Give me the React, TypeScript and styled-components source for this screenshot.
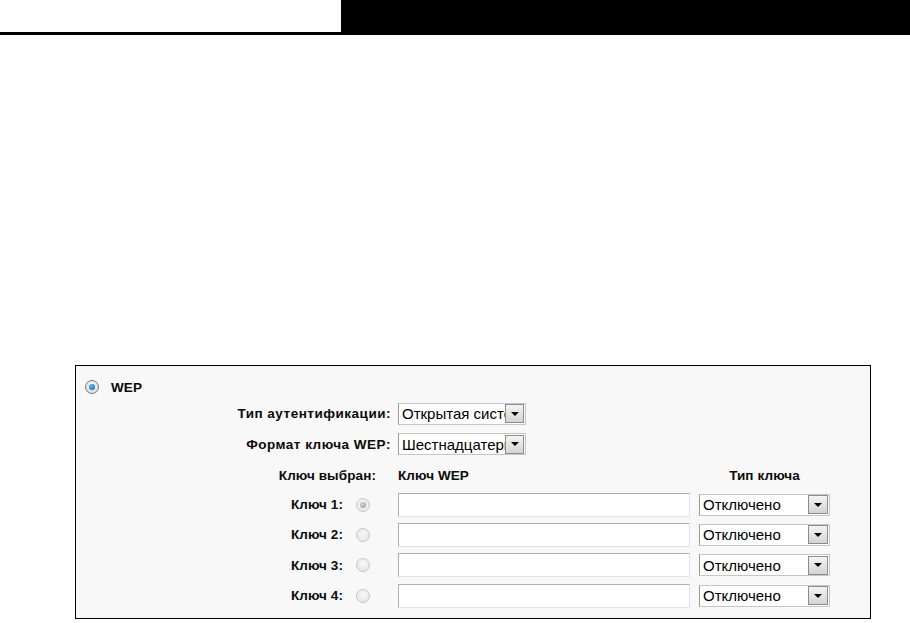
import React from "react";
import styled, { createGlobalStyle } from "styled-components";

const GlobalStyle = createGlobalStyle`
  html, body {
    margin: 0;
    padding: 0;
    background: #fff;
    font-family: "Liberation Sans", Arial, sans-serif;
  }
`;

const keys = [
  { label: "Ключ 1:", checked: true },
  { label: "Ключ 2:", checked: false },
  { label: "Ключ 3:", checked: false },
  { label: "Ключ 4:", checked: false },
];

const Page = () => {
  return (
    <Wrapper>
      <GlobalStyle />
      <Header>
        <HeaderLeft />
        <HeaderRight />
      </Header>
      <Panel>
        <Form>
          <WepRow>
            <Radio $checked $active />
            <Label $tight>WEP</Label>
          </WepRow>

          <LabelCell>
            <Label>Тип аутентификации:</Label>
          </LabelCell>
          <Cell $span={2}>
            <Select width={128} text="Открытая система" />
          </Cell>

          <LabelCell>
            <Label>Формат ключа WEP:</Label>
          </LabelCell>
          <Cell $span={2}>
            <Select width={128} text="Шестнадцатеричный" />
          </Cell>

          <LabelCell $pad={22}>
            <Label $tight>Ключ выбран:</Label>
          </LabelCell>
          <Cell>
            <Label $tight>Ключ WEP</Label>
          </Cell>
          <Cell $center>
            <Label $tight>Тип ключа</Label>
          </Cell>

          {keys.map((k) => (
            <React.Fragment key={k.label}>
              <KeyCell>
                <Label $tight>{k.label}</Label>
                <Radio $checked={k.checked} />
              </KeyCell>
              <Cell>
                <TextInput />
              </Cell>
              <Cell>
                <Select width={131} text="Отключено" wide />
              </Cell>
            </React.Fragment>
          ))}
        </Form>
      </Panel>
    </Wrapper>
  );
};

const Select = ({ width, text, wide }: { width: number; text: string; wide?: boolean }) => (
  <SelectBox style={{ width }}>
    <SelectText>{text}</SelectText>
    <ArrowButton $wide={wide}>
      <Arrow />
    </ArrowButton>
  </SelectBox>
);

export default function App() {
  return <Page />;
}

const Wrapper = styled.div`
  width: 910px;
  height: 623px;
  overflow: hidden;
`;

const Header = styled.div`
  display: flex;
  height: 32px;
  border-bottom: 3px solid #000;
`;

const HeaderLeft = styled.div`
  width: 341px;
  background: #fff;
`;

const HeaderRight = styled.div`
  flex: 1;
  background: #000;
`;

const Panel = styled.div`
  margin: 330px 0 0 75px;
  width: 794px;
  height: 252px;
  border: 1px solid #000;
  background: #f8f8f8;
`;

const Form = styled.div`
  display: grid;
  grid-template-columns: 322px 301px 131px;
  grid-template-rows: 24.5px 28.5px 32px 30px 29px 31px 30px 31px;
  padding-top: 9px;
  align-items: center;
`;

const WepRow = styled.div`
  grid-column: 1 / -1;
  display: flex;
  align-items: center;
  gap: 12px;
  padding-left: 9px;
`;

const Label = styled.span<{ $tight?: boolean }>`
  font-size: 13.5px;
  font-weight: bold;
  color: #0a0a0a;
  letter-spacing: ${(p) => (p.$tight ? 0.1 : 0.5)}px;
  white-space: nowrap;
`;

const LabelCell = styled.div<{ $pad?: number }>`
  display: flex;
  justify-content: flex-end;
  padding-right: ${(p) => p.$pad ?? 7}px;
`;

const KeyCell = styled.div`
  display: flex;
  justify-content: flex-end;
  align-items: center;
  gap: 13px;
  padding-right: 28px;
`;

const Cell = styled.div<{ $span?: number; $center?: boolean }>`
  display: flex;
  align-items: center;
  justify-content: ${(p) => (p.$center ? "center" : "flex-start")};
  grid-column: span ${(p) => p.$span ?? 1};
`;

const Radio = styled.span<{ $checked?: boolean; $active?: boolean }>`
  position: relative;
  width: 14px;
  height: 14px;
  border-radius: 50%;
  border: 1px solid ${(p) => (p.$active ? "#7a7a7a" : "#c6c6c6")};
  background: ${(p) =>
    p.$active
      ? "radial-gradient(circle at 50% 40%, #ffffff, #cfcfcf)"
      : "radial-gradient(circle at 50% 40%, #f7f7f7, #e2e2e2)"};
  box-sizing: border-box;
  flex-shrink: 0;

  &::after {
    content: "";
    display: ${(p) => (p.$checked ? "block" : "none")};
    position: absolute;
    left: 3px;
    top: 3px;
    width: 6px;
    height: 6px;
    border-radius: 50%;
    background: ${(p) =>
      p.$active
        ? "radial-gradient(circle at 40% 35%, #5cc4ff, #0b4f9a)"
        : "radial-gradient(circle at 40% 35%, #d4d4d4, #939393)"};
  }
`;

const SelectBox = styled.div`
  display: flex;
  align-items: center;
  height: 22px;
  box-sizing: border-box;
  background: #fff;
  border: 1px solid #c6c6c6;
  border-left-color: #9a9a9a;
  overflow: hidden;
`;

const SelectText = styled.span`
  flex: 1;
  padding-left: 3px;
  font-size: 15px;
  color: #000;
  white-space: nowrap;
  overflow: hidden;
`;

const ArrowButton = styled.span<{ $wide?: boolean }>`
  display: flex;
  align-items: center;
  justify-content: center;
  width: ${(p) => (p.$wide ? 20 : 19)}px;
  height: 19px;
  margin-right: 1px;
  box-sizing: border-box;
  border: 1px solid #8c8c8c;
  background: linear-gradient(#f4f4f4, #d4d4d4);
  flex-shrink: 0;
`;

const Arrow = styled.span`
  width: 0;
  height: 0;
  border-left: 4px solid transparent;
  border-right: 4px solid transparent;
  border-top: 4px solid #000;
`;

const TextInput = styled.div`
  width: 292px;
  height: 24px;
  box-sizing: border-box;
  background: #fff;
  border: 1px solid #e2e3ea;
  border-top-color: #abadb3;
  border-left-color: #abadb3;
`;
